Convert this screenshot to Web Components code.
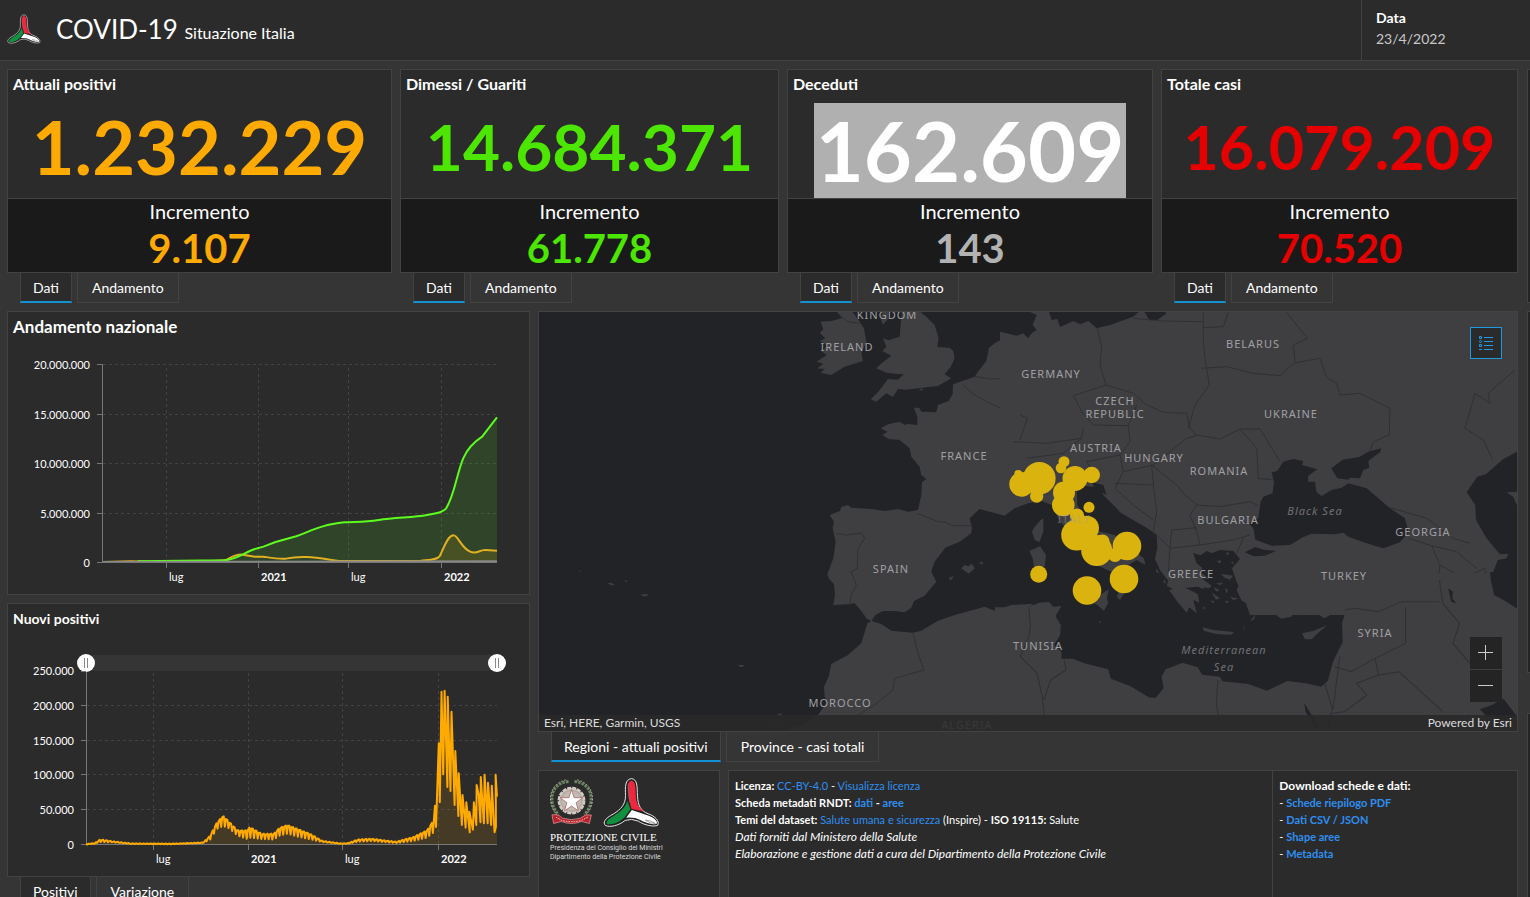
<!DOCTYPE html>
<html lang="it">
<head>
<meta charset="utf-8">
<title>COVID-19 Situazione Italia</title>
<style>
html{background:#353535}
body{margin:0;height:100vh;overflow:hidden;background:#353535;color:#fff;font-family:Lato,"Open Sans",sans-serif;font-size:14px}
</style>
</head>
<body>
<covid-dashboard></covid-dashboard>

<template id="t-logo">
<style>:host{display:block}svg{display:block;width:100%;height:100%}</style>
<svg viewBox="194 24 172 150" role="img" aria-label="Protezione Civile">
<path d="M280 27C260 29 261 52 262 78C262 105 248 120 225 134C199 147 193 160 201 168C215 175 241 169 261 153Q280 146 300 155C320 168 346 173 359 168C366 155 350 139 330 133C306 123 300 108 298 80C297 50 298 29 280 27Z" fill="#222" stroke="#e8e8e8" stroke-width="3"/>
<path d="M279 33C267 34 267 58 272 90L280 118L317 126C299 112 294 98 293 78C292 46 291 34 279 33Z" fill="#f0263f"/>
<path d="M267 94L277 119L260 143C240 163 217 168 205 163C202 152 224 142 240 131C256 119 264 108 267 94Z" fill="#11913f"/>
<path d="M281 122L330 138C350 145 360 156 356 163C342 168 322 160 305 151Q290 143 264 145Z" fill="#fff"/>
<path d="M322 152Q340 154 352 162Q336 164 322 152M270 42Q270 70 276 100" fill="none" stroke="#777" stroke-width="2"/>
</svg>
</template>

<template id="t-header">
<style>
:host{display:flex;height:60px;background:#2b2b2b;border-bottom:1px solid #424242}
cd-logo{width:34px;height:32px;margin:13px 0 0 7px}
h1{margin:0 0 0 15px;font-weight:400;font-size:26px;line-height:58px;flex:1;white-space:nowrap}
small{font-size:16px}
.date{box-sizing:border-box;width:169px;border-left:1px solid #424242;padding:7px 14px;line-height:21px}
b{display:block}
.date span{color:#c8c8c8}
</style>
<cd-logo></cd-logo>
<h1>COVID-19 <small>Situazione Italia</small></h1>
<div class="date"><b>Data</b><span>23/4/2022</span></div>
</template>

<template id="t-panel">
<style>
:host{display:block;box-sizing:border-box;background:#2b2b2b;border:1px solid #424242}
h2{margin:0;font-size:17px;font-weight:700;line-height:20px;padding:5px 5px 0}
</style>
<h2></h2><slot></slot>
</template>

<template id="t-tabs">
<style>
:host{display:flex;gap:5px;padding-left:13px;height:30px}
button{box-sizing:border-box;height:30px;margin:0;border:1px solid #424242;border-top:0;background:#353535;color:#fff;font:inherit;font-size:14px;line-height:27px;padding:0 12px 1px;white-space:nowrap}
button+button{padding:0 14px 1px}
button.on{background:#2b2b2b;border-bottom:2px solid #1492d6;padding-bottom:0}
</style>
</template>

<template id="t-indicator">
<style>
:host{display:block;min-width:0}
.card{display:grid;grid-template-rows:128px 74px;border:1px solid #424242;background:#2b2b2b}
.top{display:flex;flex-direction:column;min-height:0}
h2{margin:0;font-size:16px;line-height:20px;padding:4px 5px 0}
.value{flex:1;display:flex;align-items:center;justify-content:center;font-weight:700;color:var(--tone);min-height:0}
.value span{font-size:var(--size);line-height:95px}
:host([selected]) .value{align-items:flex-end}
:host([selected]) .value span{background:#b0b0b0;color:#fff;padding:0 2px}
.inc{border-top:1px solid #424242;background:#1a1a1a;text-align:center;font-size:20px;line-height:25px}
.inc b{display:block;font-size:40px;line-height:48px;color:var(--tone)}
</style>
<div class="card"><div class="top"><h2></h2><div class="value"><span></span></div></div>
<div class="inc">Incremento<b></b></div></div>
<cd-tabs items="Dati|Andamento"></cd-tabs>
</template>

<template id="t-trend">
<style>
:host{display:block}
svg{display:block;width:100%;overflow:visible;font-size:11px;fill:#fff}
.ax{stroke:#777;fill:none}.gr{stroke:#424242;stroke-dasharray:3 3;fill:none}
.s path{vector-effect:non-scaling-stroke;stroke-width:2;stroke-linejoin:round}
b,.b{font-weight:700}
</style>
<svg viewBox="8 337 521 257" role="img" aria-label="Andamento nazionale">
<path class="gr" d="M103 364.5H497M103 414.5H497M103 463.5H497M103 513.5H497M166.500 368V562M258.500 368V562M348.500 368V562M441.500 368V562"/>
<g class="s" transform="translate(0 305) scale(.3444 .3333)">
<path fill="#57f01c" fill-opacity=".13" stroke="none" d="M298 771L440 769L650 766C690 764 710 742 740 732L765 725L800 711L860 694C910 675 930 660 1000 652C1040 650 1060 651 1100 645C1150 637 1200 638 1240 630C1270 624 1285 622 1295 611C1320 570 1325 510 1345 460C1360 425 1385 405 1400 395L1443 337V771Z"/>
<path fill="#e6a800" fill-opacity=".13" stroke="none" d="M1220 768C1250 764 1270 764 1277 753C1290 725 1300 692 1316 691C1330 690 1338 728 1365 740C1385 750 1390 734 1410 735L1443 737V771Z"/>
<path fill="none" stroke="#e0b020" d="M298 771L380 769L440 770L600 769L655 766C675 755 685 748 705 749L740 755L765 755C790 759 810 763 830 761C880 750 920 759 985 768L1220 768C1250 764 1270 764 1277 753C1290 725 1300 692 1316 691C1330 690 1338 728 1365 740C1385 750 1390 734 1410 735L1443 737"/>
<path fill="none" stroke="#5dfb1f" d="M400 769L650 766C690 764 710 742 740 732L765 725L800 711L860 694C910 675 930 660 1000 652C1040 650 1060 651 1100 645C1150 637 1200 638 1240 630C1270 624 1285 622 1295 611C1320 570 1325 510 1345 460C1360 425 1385 405 1400 395L1443 337"/>
<path fill="none" stroke="#888" d="M298 771L760 770L1443 769"/>
</g>
<path class="ax" d="M102.500 364V562.500H497M97 364.500H103M97 414.500H103M97 463.500H103M97 513.500H103M97 562.500H103M166.500 562V568M258.500 562V568M348.500 562V568M441.500 562V568"/>
<g text-anchor="end"><text x="90" y="369">20.000.000</text><text x="90" y="419">15.000.000</text><text x="90" y="468">10.000.000</text><text x="90" y="518">5.000.000</text><text x="90" y="567">0</text></g>
<text x="169" y="581">lug</text><text class="b" x="261" y="581">2021</text><text x="351" y="581">lug</text><text class="b" x="444" y="581">2022</text>
</svg>
</template>

<template id="t-daily">
<style>
:host{display:block}
.range{display:grid;height:18px;margin:25px 23px 0 69px;background:linear-gradient(#353535,#353535) center/calc(100% - 18px) 16px no-repeat}
input{grid-area:1/1;-webkit-appearance:none;appearance:none;margin:0;width:100%;height:18px;background:none;pointer-events:none}
input::-webkit-slider-thumb{-webkit-appearance:none;pointer-events:auto;width:18px;height:18px;border-radius:50%;background:linear-gradient(#888,#888) 7px 4px/1px 10px no-repeat,linear-gradient(#888,#888) 10px 4px/1px 10px no-repeat,#fff}
svg{display:block;width:100%;overflow:visible;font-size:11px;fill:#fff}
.ax{stroke:#777;fill:none}.gr{stroke:#424242;stroke-dasharray:3 3;fill:none}
.b{font-weight:700}
#line{fill:none;stroke:#ffaa00;stroke-width:2;vector-effect:non-scaling-stroke;stroke-linejoin:round}
#area{fill:#ffaa00;fill-opacity:.12}
</style>
<div class="range"><input type="range" min="0" max="100" value="0" aria-label="Data iniziale"><input type="range" min="0" max="100" value="100" aria-label="Data finale"></div>
<svg viewBox="8 672 521 204" role="img" aria-label="Nuovi positivi">
<path class="gr" d="M87 705.500H497M87 740.500H497M87 774.500H497M87 809.500H497M153.500 673V844M248.500 673V844M342.500 673V844M438.500 673V844"/>
<path class="ax" d="M86.500 672V844.500H497M81 671.500H86M81 705.500H87M81 740.500H87M81 774.500H87M81 809.500H87M81 844.500H87M153.500 844V850M248.500 844V850M342.500 844V850M438.500 844V850"/>
<g transform="translate(0 595) scale(.3444 .3333)"><path id="area"/><path id="line"/></g>
<g text-anchor="end"><text x="74" y="675">250.000</text><text x="74" y="710">200.000</text><text x="74" y="745">150.000</text><text x="74" y="779">100.000</text><text x="74" y="814">50.000</text><text x="74" y="849">0</text></g>
<text x="156" y="863">lug</text><text class="b" x="251" y="863">2021</text><text x="345" y="863">lug</text><text class="b" x="441" y="863">2022</text>
</svg>
</template>

<template id="t-map">
<style>
:host{display:block;position:relative;box-sizing:border-box;height:421px;border:1px solid #424242;background:#222327;overflow:hidden}
svg.m{display:block;width:100%;height:100%}
.land{fill:#3f3f42}.sea{fill:#222327}
.bd{fill:none;stroke:#303033;stroke-width:3;stroke-linejoin:round}
.lb{font-family:"Noto Sans","Open Sans",sans-serif;font-size:11px;letter-spacing:1px;fill:#a0a0a3;text-anchor:middle}
.lb .w{font-style:italic;fill:#707074}
.dots{fill:#dbb30e}
button{position:absolute;right:15px;width:32px;height:32px;padding:0;margin:0;border:0;background:#242424;display:grid;place-items:center}
.legend{top:15px;border:1px solid #1e9be0;background:#2b2b2b}
.in{top:325px}.out{top:358px}
footer{position:absolute;left:0;right:0;bottom:0;height:16px;padding:0 5px;display:flex;justify-content:space-between;background:rgba(41,41,41,.88);font-size:12px;line-height:16px;color:#dcdcdc}
</style>
<svg class="m" viewBox="539 312 978 419" preserveAspectRatio="xMidYMid slice" role="img" aria-label="Mappa delle regioni">
<g transform="translate(538 305) scale(.3333)">
<path class="land" d="M892 15L912 40L880 48L848 50L856 72L846 84L862 100L846 108L870 122L850 138L866 150L836 170L856 176L838 190L860 192L848 203L880 210L920 185L975 168L970 145L985 110L978 70L965 50L940 15ZM1092 15L1085 95L1052 106L1035 100L1045 125L1033 138L1060 152L1032 174L1015 190L1045 203L1070 206L1098 208L1080 224L1050 222L1020 262L998 283L1015 290L1045 265L1065 276L1080 252L1105 254L1140 250L1200 243L1240 220L1220 208L1238 186L1250 160L1246 138L1235 128L1198 126L1202 100L1190 60L1165 35L1140 15ZM1142 254L1154 250V257ZM1035 15L1028 40L1035 60L1050 42V15ZM1270 790L1280 780L1292 784L1300 776L1311 790L1292 806ZM1322 770L1336 772L1332 780ZM1232 818L1247 814L1243 822L1236 826ZM207 833L222 834L230 841L218 841ZM258 828L266 826L268 832ZM308 868L332 868L326 874H314ZM122 796L128 798L125 802Z"/>
<path class="land" d="M1520 60L1500 75L1482 98L1470 85L1450 85L1430 95L1400 100L1375 112L1353 128L1345 168L1320 200L1310 215L1245 238L1244 268L1232 288L1200 300L1195 322L1150 320L1144 308L1128 308L1138 335V360L1108 357L1100 360L1085 350L1050 358L1028 370L1048 380L1033 390L1052 402L1085 405L1115 430L1120 455L1145 485L1150 510L1165 522L1152 532L1150 570L1140 615L1110 620L1080 612L1040 618L1000 612L940 608L930 600L910 606L906 618L875 630L888 650L884 670L893 710L886 760L868 808L872 820L888 838L891 870L886 900L930 898L950 895L972 920L985 940L1000 949L1012 930L1035 918L1070 918L1100 922L1120 908L1128 888L1160 872L1195 830L1180 800L1190 770L1222 728L1265 710L1300 685L1302 668L1295 640L1325 612L1400 632L1430 610L1470 595L1560 580V60Z"/>
<path class="bd" d="M1138 625L1200 650L1225 652L1240 662L1300 662M895 685L925 690L970 684L980 700L960 730L958 790L940 800L955 840L940 870L935 900M1275 240L1310 270L1350 292L1400 315L1470 345L1455 410L1500 412M1430 100L1420 150L1428 190L1400 220L1405 260L1390 290L1400 315M1310 215L1360 222L1395 220M1455 410L1415 440L1398 480M900 25L930 50L965 55"/>
</g>
<g transform="translate(1020 305) scale(.3333)">
<path class="land" d="M-60 0H1500V930H690L672 880L650 830L636 790L660 762L640 738L600 735L575 745L560 738L540 752L520 745L530 775L548 790L540 800L568 822L545 820L575 842L568 850L530 845L490 850L478 872L455 850L440 842L445 828L420 795L405 762L412 730L410 690L380 668L330 640L280 610L250 575L243 540L215 545L170 540L172 600L195 640L240 680L285 690L330 730L372 760L376 780L350 765L325 780L334 810L322 850L300 885L290 875L305 840L295 810L230 780L200 740L160 690L120 650L95 600L40 578L-60 600Z"/>
<path class="sea" d="M-60 0L28 20L50 30L38 60L50 75L35 85L24 100L10 85L-10 92L-60 80ZM85 15L95 45L112 42L120 66L160 48L180 58L205 48L230 70L270 60L340 35L362 15ZM370 15L388 45H412L438 26L434 15Z"/>
<path class="sea" d="M755 502L772 498L790 470L820 462L850 468L846 480L892 493L865 512L864 530L885 530L890 562L905 573L935 555L965 548L985 535L1040 550L1110 610L1155 640L1166 682L1140 712L1090 730L1040 715L985 695L970 683L945 688L875 686L850 696L810 720L755 722L706 704L700 670L686 655L715 640L722 590L730 575L758 565L762 530ZM934 490L968 464L1018 456L1045 440L1084 430L1080 442L1045 468L1048 488L1030 495L1020 520L990 518L986 524L952 520ZM1495 438L1450 462L1398 508L1372 515L1340 562L1366 600L1368 645L1400 700L1440 748L1465 746L1460 760L1434 765L1415 812L1420 855L1495 905ZM675 742L706 726L730 734L768 738L735 752L700 754ZM1286 850L1298 855L1296 878L1310 898L1298 900L1288 875Z"/>
<path class="land" d="M1460 562L1495 560V610L1480 576ZM42 668L62 645L70 640V680L58 712L44 704L36 680ZM28 738L60 724L78 750L74 785H42L38 760ZM615 745L628 742L626 750ZM590 768L604 766L600 776ZM632 772L640 770V778ZM602 806L640 812L630 824L614 818ZM615 848L624 856L620 866ZM574 862L600 880L588 884ZM630 876L655 880L640 886ZM410 790L418 806L408 800ZM432 822L440 836L430 832Z"/>
<path class="sea" d="M520 745L548 752L558 775L545 772ZM560 745L572 762L588 780L566 772ZM575 745L590 755L600 765L584 762ZM480 850L530 850L575 865L540 862L480 860ZM210 530L250 540L260 570L240 560ZM240 560L300 620L288 616L250 585Z"/>
<path class="bd" d="M232 68L245 125L240 180L258 240L340 265L380 300L430 322L500 325L510 370L530 390L600 402L660 372L720 372L780 470M550 20V110L555 160L568 240L525 300L505 370M258 240L160 272L185 320L220 360L325 362L350 300M545 190L620 185L700 205L780 212L820 175L900 160L920 218L950 235L960 270L1020 265L1110 310L1108 390L1060 410L1050 440M800 22L830 60L862 100L820 120L825 170M340 40L430 48L550 50M550 68L610 65L625 22M-20 410L80 415L185 400L190 370M185 400L130 445L20 460M325 362L330 410L300 450L310 500L400 480L500 400L530 392M300 450L200 470L240 530M310 500L285 550L340 600L400 645M285 535L400 540L395 480L470 540L495 570L530 600L600 605L690 590L715 602M400 540L410 620L400 680M530 600L510 630L530 680L540 720L450 730L455 675L530 668M400 680L450 730L445 800M540 720L640 705L690 690M660 372L710 430L715 520L760 525M1485 195L1405 265L1410 295L1365 265L1335 370L1390 405L1418 465M1110 608L1220 640L1300 700L1350 715M1166 700L1235 722L1260 780L1330 820L1395 790L1400 830M1235 722L1310 740L1370 790M1260 780L1250 880M670 700L650 745M0 405L22 340L0 330"/>
</g>
<g transform="translate(538 590) scale(.3333)">
<path class="land" d="M1530 46L1500 52L1480 42L1420 45L1370 62L1340 50L1250 75L1200 92L1150 122L1125 128L1060 122L1030 102L1000 93L988 100L970 160L930 195L880 222L872 260L858 290L860 320L868 335L840 375L800 402L730 424H1530ZM600 224L620 226L614 231H606ZM718 372L734 370L724 378ZM612 398L622 404ZM655 402L665 408ZM710 395L722 388L712 404Z"/>
<path class="bd" d="M1125 128L1140 190L1158 240L1070 265L1065 300L1010 345L960 375M1480 45L1475 140L1450 190L1500 260"/>
</g>
<g transform="translate(1000 580) scale(.338 .3333)">
<path class="land" d="M-15 82L20 82L50 74L90 80L115 68L145 66L158 80L182 78L164 108L180 135L178 165L160 195L182 215V236L215 236L250 250L320 268L328 296L385 318L440 352L460 354L484 325L478 290L490 268L540 248L585 262L598 284L650 290L658 304L735 312L790 332L850 303L905 310L950 320L970 302L985 245L1014 185L1012 130L1024 88L1000 92L960 115L935 100L908 85L870 90L862 110L832 116L790 85L768 88L715 62L700 30L715 0V-20H1540V460H-15Z"/>
<path class="land" d="M500 30L545 22L585 42L590 68L572 60L582 100L560 82L552 98L525 65ZM600 142L630 150L692 156L684 164L640 162L602 152ZM894 160L928 152L968 136L940 160L922 178L902 178ZM285 52L322 28L316 55L320 68L308 92L284 72L240 60V45ZM740 124L756 103L752 118ZM290 123L300 126L297 130ZM722 132L724 148L721 148ZM585 8L605 28L592 24ZM632 22L650 30L640 35ZM665 62L678 64L670 70ZM625 60L636 66L628 70ZM600 80L610 84L603 88ZM640 10L662 8L650 16Z"/>
<path class="sea" d="M1450 -24L1452 0L1462 45L1490 60L1540 92V-24ZM1420 388L1455 375L1490 356L1530 410L1490 418L1440 410ZM1326 25L1340 35L1338 55L1350 70L1335 65ZM900 368L945 445H935L904 395ZM982 384L974 440H968Z"/>
<path class="bd" d="M85 80L90 140L85 170L60 230L110 280L125 350L135 440M190 240L195 270L150 300L130 360M645 300L640 370L650 440M1020 90L1050 85L1120 95L1190 65L1300 65M1200 80L1200 190L1110 235L1120 285L1180 275L1310 395M1110 235L1040 275L990 260M1120 285L1055 310L1085 345L1020 395L980 400M1300 0L1310 70L1360 130L1340 190L1390 250M960 310L985 390L1005 230"/>
</g>
<g class="lb" transform="translate(1 0)">
<text x="886" y="319">KINGDOM</text><text x="846" y="351">IRELAND</text><text x="1050" y="378">GERMANY</text><text x="1252" y="348">BELARUS</text><text x="1114" y="405">CZECH</text><text x="1114" y="418">REPUBLIC</text><text x="1290" y="418">UKRAINE</text><text x="1095" y="452">AUSTRIA</text><text x="1153" y="462">HUNGARY</text><text x="1218" y="475">ROMANIA</text><text x="963" y="460">FRANCE</text><text x="1227" y="524">BULGARIA</text><text x="1422" y="536">GEORGIA</text><text x="890" y="573">SPAIN</text><text x="1190" y="578">GREECE</text><text x="1343" y="580">TURKEY</text><text x="1374" y="637">SYRIA</text><text x="1037" y="650">TUNISIA</text><text x="839" y="707">MOROCCO</text><text x="966" y="729">ALGERIA</text>
<text class="w" x="1314" y="515">Black Sea</text><text class="w" x="1223" y="654">Mediterranean</text><text class="w" x="1223" y="671">Sea</text>
</g>
<g class="dots"><circle cx="1021.700" cy="484.300" r="12.400"/><circle cx="1039.300" cy="478.300" r="16.300"/><circle cx="1018.300" cy="474" r="4"/><circle cx="1036.700" cy="496" r="6.700"/><circle cx="1064" cy="461.700" r="5.500"/><circle cx="1061" cy="468" r="5.300"/><circle cx="1075" cy="478.500" r="12.500"/><circle cx="1091.700" cy="475" r="8.300"/><circle cx="1064" cy="492.500" r="11"/><circle cx="1063.300" cy="505" r="11.300"/><circle cx="1089" cy="507.300" r="5.500"/><circle cx="1077" cy="515.500" r="7"/><circle cx="1076.700" cy="535" r="15.500"/><circle cx="1086.700" cy="528" r="12.300"/><circle cx="1096.700" cy="550.500" r="15.500"/><circle cx="1102.500" cy="541.500" r="7"/><circle cx="1115" cy="555" r="7"/><circle cx="1127" cy="546" r="14.300"/><circle cx="1124" cy="579" r="14.300"/><circle cx="1087" cy="590.500" r="14.300"/><circle cx="1038.700" cy="574.300" r="8.500"/></g>
<text class="lb" x="1074" y="523" style="fill-opacity:.5">ITALY</text>
</svg>
<button class="legend" aria-label="Legenda"><svg width="16" height="16" fill="none" stroke="#1e9be0"><path d="M6 2.500H15M6 6.500H15M6 10.500H15M6 14.500H15M1.500 1.500h2v2h-2ZM1.500 9.500h2v2h-2ZM1 14.500h3"/><circle cx="2.500" cy="6.500" r="1"/></svg></button>
<button class="in" aria-label="Zoom avanti"><svg width="16" height="16" stroke="#ccc"><path d="M0 7.500H15M7.500 0V15"/></svg></button>
<button class="out" aria-label="Zoom indietro"><svg width="16" height="16" stroke="#ccc"><path d="M0 7.500H15"/></svg></button>
<footer><span>Esri, HERE, Garmin, USGS</span><span>Powered by Esri</span></footer>
</template>

<template id="t-credits">
<style>
:host{display:block;padding:6px 11px}
.row{display:flex;align-items:flex-start;height:54px}
.row svg{width:43px;height:48px;margin-top:1px}
cd-logo{width:57px;height:51px;margin-left:10px}
strong{display:block;font:400 11px/13px "Liberation Serif",serif;white-space:nowrap}
small{display:block;font:7px/9px Roboto,sans-serif;color:#d8d8d8;white-space:nowrap}
</style>
<div class="row">
<svg viewBox="32 28 130 142" role="img" aria-label="Repubblica Italiana">
<g fill="none" stroke-width="9" stroke-dasharray="8 3"><path stroke="#6d8560" d="M88 37C30 42 25 105 58 137"/><path stroke="#6d8560" d="M106 37C164 42 169 105 136 137"/></g>
<g fill="none" stroke="#d7ddcf" stroke-width="2" stroke-dasharray="5 5"><path d="M80 32C22 45 25 110 52 137M114 32C172 45 169 110 142 137"/></g>
<circle cx="97" cy="95" r="38" fill="#b5aca5" stroke="#d3cbc5" stroke-width="8" stroke-dasharray="12 3"/><circle cx="97" cy="95" r="29" fill="#c3bab3"/>
<path d="M97 62L105 86H131L111 101L118 126L97 111L76 126L83 101L63 86H89Z" fill="#fff" stroke="#a34b4b" stroke-width="2"/>
<path d="M38 138Q58 134 70 148Q98 157 124 148Q138 134 157 138L151 164L128 158Q97 170 66 158L43 164Z" fill="#b7222b" stroke="#e7a7a7" stroke-width="2"/>
<path d="M50 145L66 154Q98 163 128 154L146 145" fill="none" stroke="#f1c8c8" stroke-width="3" stroke-dasharray="5 3"/>
</svg><cd-logo></cd-logo></div>
<strong>PROTEZIONE CIVILE</strong>
<small>Presidenza del Consiglio dei Ministri</small><small>Dipartimento della Protezione Civile</small>
</template>

<template id="t-info">
<style>
:host{display:grid;grid-template-columns:544fr 245fr;height:100%;font-size:11px;line-height:17px;white-space:nowrap}
div{padding:6px}
div+div{border-left:1px solid #424242}
p{margin:0}
a{color:#2e8ef0;text-decoration:none}
.h,i{font-size:12px}
</style>
<div>
<p><b>Licenza:</b> <a href="#licenza">CC-BY-4.0</a> - <a href="#visualizza">Visualizza licenza</a></p>
<p><b>Scheda metadati RNDT: <a href="#dati">dati</a> - <a href="#aree">aree</a></b></p>
<p><b>Temi del dataset:</b> <a href="#salute">Salute umana e sicurezza</a> (Inspire) - <b>ISO 19115:</b> Salute</p>
<p><i>Dati forniti dal Ministero della Salute</i></p>
<p><i>Elaborazione e gestione dati a cura del Dipartimento della Protezione Civile</i></p>
</div>
<div>
<p class="h"><b>Download schede e dati:</b></p>
<p>- <a href="#pdf"><b>Schede riepilogo PDF</b></a></p>
<p>- <a href="#csv"><b>Dati CSV / JSON</b></a></p>
<p>- <a href="#shape"><b>Shape aree</b></a></p>
<p>- <a href="#metadata"><b>Metadata</b></a></p>
</div>
</template>

<template id="t-dashboard">
<style>
:host{display:block}
main{display:grid;grid-template-columns:minmax(0,1fr) 3px;gap:9px;padding:8px 0 0 7px}
.kpis{display:grid;grid-template-columns:385fr 379fr 366fr 357fr;gap:8px}
.body{display:grid;grid-template-columns:523fr 980fr;gap:8px;margin-top:8px}
.left,.right{display:flex;flex-direction:column;min-width:0}
.trend{min-height:284px;margin-bottom:8px}
.daily{min-height:274px}
.foot{display:grid;grid-template-columns:182fr 790fr;gap:8px;flex:1;margin-top:8px}
.next{display:grid;grid-template-rows:234px 362px 1fr;gap:8px}
.next i{background:#242424;border:1px solid #424242;border-right:0}
.next i:last-child{margin-top:32px}
</style>
<cd-header></cd-header>
<main>
<div>
<section class="kpis">
<cd-indicator label="Attuali positivi" value="1.232.229" inc="9.107" style="--tone:#ffaa00;--size:74px"></cd-indicator>
<cd-indicator label="Dimessi / Guariti" value="14.684.371" inc="61.778" style="--tone:#4ce600;--size:64px"></cd-indicator>
<cd-indicator selected label="Deceduti" value="162.609" inc="143" style="--tone:#b2b2b2;--size:83px"></cd-indicator>
<cd-indicator label="Totale casi" value="16.079.209" inc="70.520" style="--tone:#e60000;--size:61px"></cd-indicator>
</section>
<section class="body">
<div class="left">
<cd-panel class="trend" heading="Andamento nazionale"><cd-trend></cd-trend></cd-panel>
<cd-panel class="daily" heading="Nuovi positivi" small><cd-daily></cd-daily></cd-panel>
<cd-tabs items="Positivi|Variazione"></cd-tabs>
</div>
<div class="right">
<cd-map></cd-map>
<cd-tabs items="Regioni - attuali positivi|Province - casi totali"></cd-tabs>
<div class="foot"><cd-panel><cd-credits></cd-credits></cd-panel><cd-panel><cd-info></cd-info></cd-panel></div>
</div>
</section>
</div>
<div class="next"><i></i><i></i><i></i></div>
</main>
</template>

<script>
class Base extends HTMLElement {
  constructor() {
    super();
    const id = 't-' + this.localName.replace(/^(cd|covid)-/, '');
    this.attachShadow({ mode: 'open' }).append(document.getElementById(id).content.cloneNode(true));
  }
  $(s) { return this.shadowRoot.querySelector(s); }
}
class Tabs extends Base {
  connectedCallback() {
    if (this.$('button')) return;
    this.setAttribute('role', 'tablist');
    this.getAttribute('items').split('|').forEach((t, i) => {
      const b = document.createElement('button');
      b.textContent = t;
      b.setAttribute('role', 'tab');
      if (!i) b.className = 'on';
      b.onclick = () => this.shadowRoot.querySelectorAll('button').forEach(x => x.classList.toggle('on', x === b));
      this.shadowRoot.append(b);
    });
  }
}
class Panel extends Base {
  connectedCallback() {
    const h = this.$('h2');
    if (!this.hasAttribute('heading')) { h.hidden = true; h.style.display = 'none'; return; }
    h.textContent = this.getAttribute('heading');
    if (this.hasAttribute('small')) h.style.fontSize = '14px';
  }
}
class Indicator extends Base {
  connectedCallback() {
    this.$('h2').textContent = this.getAttribute('label');
    this.$('.value span').textContent = this.getAttribute('value');
    this.$('.inc b').textContent = this.getAttribute('inc');
  }
}
class Daily extends Base {
  connectedCallback() {
    // weekly swing between an upper and a lower envelope: x, high, low
    const env = [[250,747,747],[275,744,746],[291,733,741],[330,739,742],[380,745,746],[500,746,746],[590,742,744],[610,722,734],[630,682,702],[648,662,693],[665,680,700],[690,706,722],[718,706,732],[725,696,728],[760,716,732],[795,716,734],[812,698,722],[835,690,716],[860,700,724],[900,716,733],[935,737,741],[990,745,746],[1010,744,746],[1040,733,740],[1080,731,738],[1150,740,744],[1200,726,738],[1240,706,728],[1255,682,715]];
    const at = (x, k) => { let i = 1; while (i < env.length - 1 && env[i][0] < x) i++; const a = env[i - 1], b = env[i]; return a[k] + (b[k] - a[k]) * (x - a[0]) / (b[0] - a[0]); };
    const pts = [];
    for (let x = 250; x < 1253; x += 10.6) pts.push([x, at(x, 2)], [x + 3, at(x + 3, 1) + 2], [x + 7.5, at(x + 7.5, 1)]);
    pts.push([1257,714],[1263,632],[1266,696],[1274,445],[1277,622],[1282,290],[1287,538],[1291,287],[1299,576],[1300,305],[1308,588],[1311,350],[1320,630],[1322,468],[1331,663],[1332,535],[1341,690],[1343,600],[1352,698],[1354,622],[1364,712],[1363,650],[1373,704],[1376,622],[1383,690],[1384,570],[1390,600],[1395,682],[1396,546],[1405,685],[1407,539],[1416,685],[1417,563],[1426,690],[1428,572],[1436,712],[1440,695],[1439,539],[1443,605]);
    const d = 'M' + pts.map(p => p[0].toFixed(1) + ' ' + p[1].toFixed(1)).join('L');
    this.$('#line').setAttribute('d', d);
    this.$('#area').setAttribute('d', d + 'V747H250Z');
  }
}
customElements.define('cd-logo', class extends Base {});
customElements.define('cd-header', class extends Base {});
customElements.define('cd-panel', Panel);
customElements.define('cd-tabs', Tabs);
customElements.define('cd-indicator', Indicator);
customElements.define('cd-trend', class extends Base {});
customElements.define('cd-daily', Daily);
customElements.define('cd-map', class extends Base {});
customElements.define('cd-credits', class extends Base {});
customElements.define('cd-info', class extends Base {});
customElements.define('covid-dashboard', class extends Base {});
</script>
</body>
</html>
